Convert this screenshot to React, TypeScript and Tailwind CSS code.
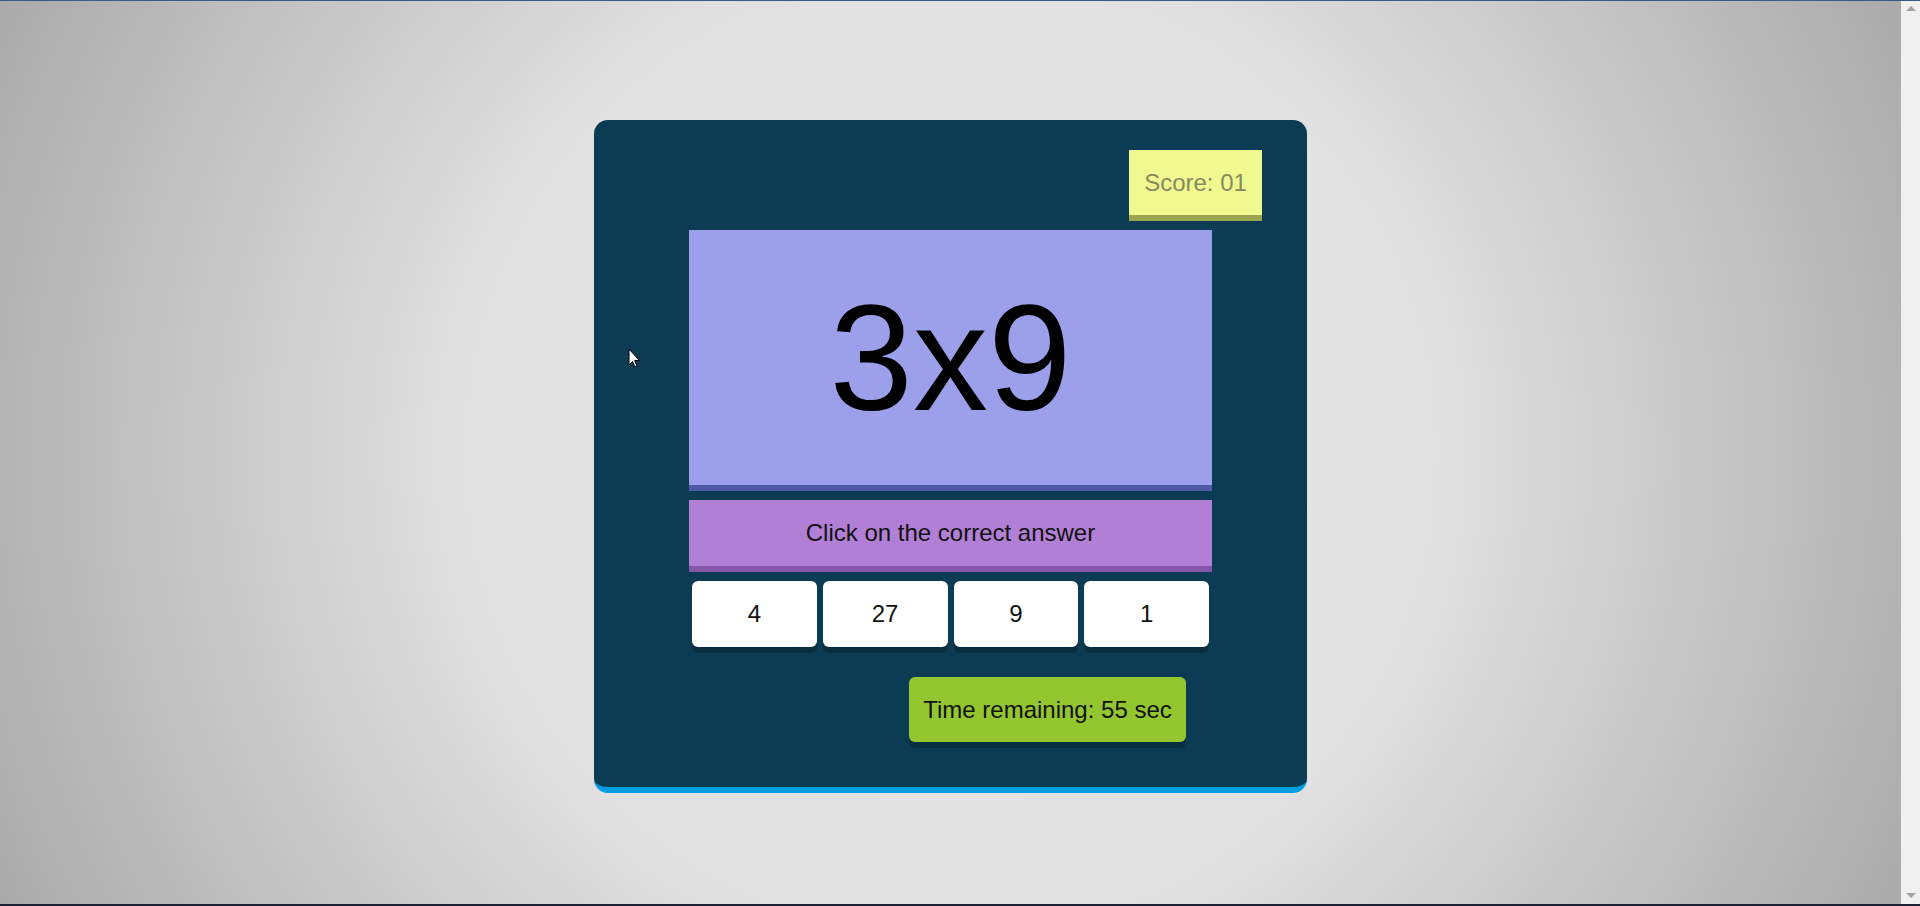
import React from "react";

function Cursor() {
  return (
    <svg
      className="absolute left-[628px] top-[348px]"
      width="13"
      height="21"
      viewBox="0 0 13 21"
    >
      <path
        d="M1 1 L1 17 L4.5 13.5 L7 19 L9 18 L6.6 12.6 L11.5 12.6 Z"
        fill="#ffffff"
        stroke="#000000"
        strokeWidth="1"
        strokeLinejoin="miter"
      />
    </svg>
  );
}

export default function App() {
  const answers = ["4", "27", "9", "1"];
  return (
    <div className="relative flex h-[906px] w-[1920px] flex-col overflow-hidden font-['Liberation_Sans',Arial,sans-serif]">
      <div className="h-[1px] w-full bg-[#3b5a80]" />
      <div className="flex flex-1">
        <main className="flex flex-1 justify-center bg-[radial-gradient(circle_farthest-corner_at_center,#e3e3e3_0%,#e2e2e2_45%,#aaaaaa_100%)]">
          <div className="mt-[119px] box-border flex h-[673px] w-[713px] flex-col rounded-[14px] border-b-[6px] border-[#009fe3] bg-[#0b3c53] pt-[30px]">
            <div className="flex justify-end pr-[45px]">
              <div className="box-border flex h-[71px] w-[133px] items-center justify-center border-b-[6px] border-[#9ea54f] bg-[#eff98f] text-[24px] text-[#868a5f]">
                Score: 01
              </div>
            </div>
            <div className="mx-auto mt-[9px] flex w-[523px] flex-col">
              <div className="box-border flex h-[261px] items-center justify-center border-b-[6px] border-[#4f5aa5] bg-[#9ca0ea] text-[150px] leading-none text-black">
                3x9
              </div>
              <div className="mt-[9px] box-border flex h-[72px] items-center justify-center border-b-[6px] border-[#8555a8] bg-[#b180d6] text-[24px] text-[#111]">
                Click on the correct answer
              </div>
              <div className="mt-[9px] flex gap-[6px] px-[3px]">
                {answers.map((a) => (
                  <div
                    key={a}
                    className="flex h-[66px] flex-1 items-center justify-center rounded-[6px] bg-white text-[24px] text-[#111] shadow-[0_6px_0_#072f40]"
                  >
                    {a}
                  </div>
                ))}
              </div>
              <div className="mt-[30px] flex justify-end pr-[26px]">
                <div className="flex h-[65px] w-[277px] items-center justify-center rounded-[6px] bg-[#94c62f] text-[24px] text-[#111] shadow-[0_6px_0_#072f40]">
                  Time remaining: 55 sec
                </div>
              </div>
            </div>
          </div>
        </main>
        <div className="flex w-[19px] flex-col items-center justify-between bg-[#f0f0f0] py-[5px]">
          <svg width="10" height="6" viewBox="0 0 10 6">
            <path d="M5 0 L10 5 L0 5 Z" fill="#a3a3a3" />
          </svg>
          <svg width="10" height="6" viewBox="0 0 10 6">
            <path d="M0 0 L10 0 L5 5 Z" fill="#a3a3a3" />
          </svg>
        </div>
      </div>
      <div className="h-[2px] w-full bg-[#1c2433]" />
      <Cursor />
    </div>
  );
}
